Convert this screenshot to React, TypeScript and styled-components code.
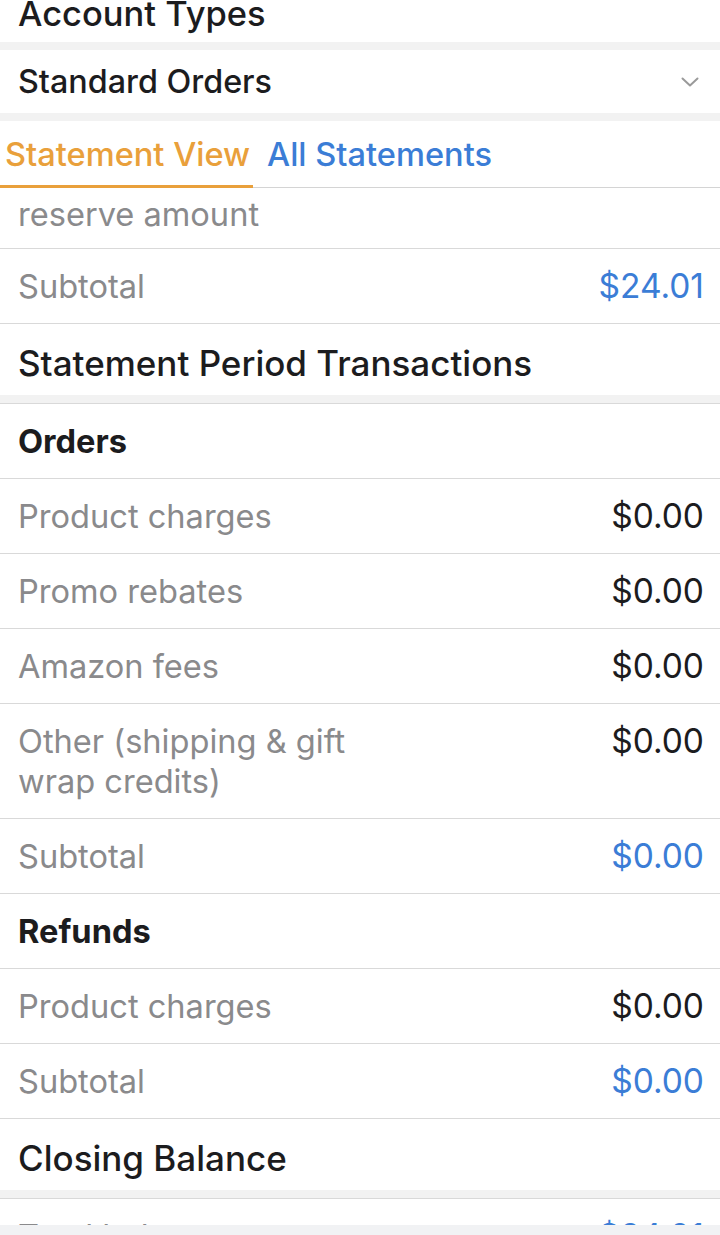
import React from "react";
import styled, { createGlobalStyle } from "styled-components";

const GlobalStyle = createGlobalStyle`
  html, body {
    margin: 0;
    padding: 0;
    background: #ffffff;
    overflow: hidden;
  }
  body {
    font-family: Inter, "Liberation Sans", Arial, sans-serif;
    -webkit-font-smoothing: antialiased;
  }
`;

const Page = styled.div`
  width: 720px;
  background: #ffffff;
`;

const Band = styled.div<{ $line?: boolean }>`
  height: 8px;
  background: #f2f2f2;
  border-bottom: ${(p) => (p.$line ? "1px solid #d9d9d9" : "none")};
`;

const TopTitle = styled.div`
  height: 42px;
  display: flex;
  align-items: flex-end;
  padding: 0 18px 8px;
  box-sizing: border-box;
  overflow: hidden;
  font-size: 34.5px;
  font-weight: 500;
  line-height: 40px;
  color: #1c1c1e;
`;

const SelectRow = styled.div`
  height: 63px;
  display: flex;
  align-items: center;
  justify-content: space-between;
  padding: 0 18px;
  font-size: 32.3px;
  font-weight: 500;
  color: #1c1c1e;
`;

const Tabs = styled.div`
  height: 67px;
  display: flex;
  align-items: stretch;
  border-bottom: 1px solid #d4d4d4;
  box-sizing: border-box;
`;

const Tab = styled.div<{ $active?: boolean }>`
  display: flex;
  align-items: center;
  padding: 2px ${(p) => (p.$active ? "3px" : "5px")} 0 5px;
  margin-right: ${(p) => (p.$active ? "9px" : "0")};
  font-size: 32.6px;
  font-weight: 500;
  color: ${(p) => (p.$active ? "#e9a03b" : "#3b7dd6")};
  border-bottom: 3px solid ${(p) => (p.$active ? "#e9a03b" : "transparent")};
  margin-bottom: -1px;
`;

const Row = styled.div`
  display: flex;
  justify-content: space-between;
  align-items: flex-start;
  padding: 17px 16px 17px 18px;
  min-height: 40px;
  border-bottom: 1px solid #d9d9d9;
  font-size: 32.6px;
  line-height: 40px;
`;

const CutRow = styled(Row)`
  padding-top: 6px;
  min-height: 0;
  padding-bottom: 14px;
`;

const Label = styled.div<{ $bold?: boolean }>`
  max-width: 350px;
  color: ${(p) => (p.$bold ? "#1c1c1e" : "#8a8a8c")};
  font-weight: ${(p) => (p.$bold ? 700 : 400)};
`;

const Amount = styled.div<{ $blue?: boolean }>`
  font-size: 33.5px;
  color: ${(p) => (p.$blue ? "#3b7dd6" : "#1c1c1e")};
  white-space: nowrap;
`;

const Heading = styled.div`
  height: 71px;
  box-sizing: border-box;
  display: flex;
  align-items: center;
  padding: 6px 18px 0;
  font-size: 35px;
  font-weight: 500;
  color: #1c1c1e;
`;

const BottomBar = styled.div`
  position: fixed;
  left: 0;
  right: 0;
  bottom: 0;
  height: 10px;
  background: #f1f2f4;
`;

const Chevron = () => (
  <svg width="18" height="10" viewBox="0 0 18 10" style={{ marginRight: 3 }}>
    <path d="M1.5 1.5 L9 8.5 L16.5 1.5" fill="none" stroke="#9a9a9a" strokeWidth="2" strokeLinecap="round" strokeLinejoin="round" />
  </svg>
);

type Line = { label: string; amount?: string; blue?: boolean; bold?: boolean };

const orders: Line[] = [
  { label: "Orders", bold: true },
  { label: "Product charges", amount: "$0.00" },
  { label: "Promo rebates", amount: "$0.00" },
  { label: "Amazon fees", amount: "$0.00" },
  { label: "Other (shipping & gift wrap credits)", amount: "$0.00" },
  { label: "Subtotal", amount: "$0.00", blue: true },
  { label: "Refunds", bold: true },
  { label: "Product charges", amount: "$0.00" },
  { label: "Subtotal", amount: "$0.00", blue: true },
];

export default function App() {
  return (
    <Page>
      <GlobalStyle />
      <TopTitle>Account Types</TopTitle>
      <Band />
      <SelectRow>
        <span>Standard Orders</span>
        <Chevron />
      </SelectRow>
      <Band />
      <Tabs>
        <Tab $active>Statement View</Tab>
        <Tab>All Statements</Tab>
      </Tabs>
      <CutRow>
        <Label>reserve amount</Label>
      </CutRow>
      <Row>
        <Label>Subtotal</Label>
        <Amount $blue>$24.01</Amount>
      </Row>
      <Heading>Statement Period Transactions</Heading>
      <Band $line />
      {orders.map((l, i) => (
        <Row key={i}>
          <Label $bold={l.bold}>{l.label}</Label>
          {l.amount && <Amount $blue={l.blue}>{l.amount}</Amount>}
        </Row>
      ))}
      <Heading>Closing Balance</Heading>
      <Band $line />
      <Row>
        <Label>Total balance</Label>
        <Amount $blue>$24.01</Amount>
      </Row>
      <BottomBar />
    </Page>
  );
}
